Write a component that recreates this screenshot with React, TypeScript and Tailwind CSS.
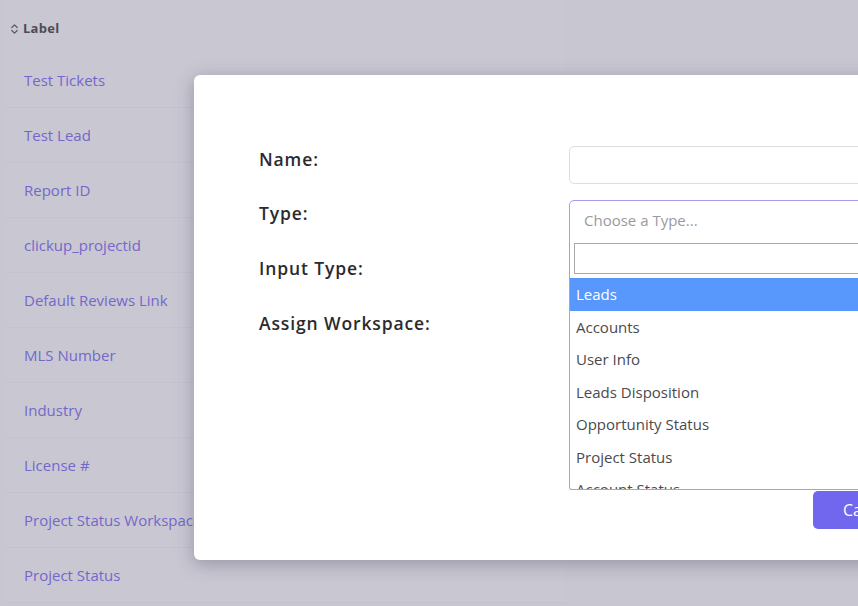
const fields = [
  'Test Tickets',
  'Test Lead',
  'Report ID',
  'clickup_projectid',
  'Default Reviews Link',
  'MLS Number',
  'Industry',
  'License #',
  'Project Status Workspace',
  'Project Status',
]

const types = [
  'Leads',
  'Accounts',
  'User Info',
  'Leads Disposition',
  'Opportunity Status',
  'Project Status',
  'Account Status',
]

function SortIcon() {
  return (
    <svg width="9" height="12" viewBox="0 0 9 12" fill="none" stroke="#5a5962" strokeWidth="1.2" strokeLinecap="round" strokeLinejoin="round">
      <path d="M1.8 4.5 L4.5 1.8 L7.2 4.5" />
      <path d="M1.8 7.5 L4.5 10.2 L7.2 7.5" />
    </svg>
  )
}

export default function App() {
  return (
    <div
      className="relative w-[858px] h-[606px] overflow-hidden bg-[#c8c6d1]"
      style={{ fontFamily: '"Open Sans", "Noto Sans", sans-serif' }}
    >
      {/* background table */}
      <div className="ml-[6px] w-[560px] bg-[#c9c7d2]">
        <div className="h-[53px] flex items-center gap-[4px] pl-[4px] pt-[4px] text-[13px] font-bold text-[#4d4c55] tracking-[0.02em]">
          <SortIcon />
          <span>Label</span>
        </div>
        {fields.map((f) => (
          <div
            key={f}
            className="h-[55px] flex items-center pl-[18px] border-b border-[#c4c2cd] text-[15px] text-[#7467cc] whitespace-nowrap"
          >
            {f}
          </div>
        ))}
      </div>

      {/* modal */}
      <div className="absolute left-[194px] top-[75px] w-[720px] h-[485px] bg-white rounded-[6px] shadow-[0_4px_18px_rgba(60,55,80,0.35)]">
        <div className="flex pt-[71px] pl-[65px]">
          <div className="w-[310px] flex flex-col text-[17.5px] font-semibold tracking-[0.05em] text-[#2b2b2e]">
            <div className="h-[54px] leading-[26px]">Name:</div>
            <div className="h-[55px] leading-[26px]">Type:</div>
            <div className="h-[55px] leading-[26px]">Input Type:</div>
            <div className="h-[55px] leading-[26px]">Assign Workspace:</div>
          </div>
          <div className="flex-1 flex flex-col">
            <div className="h-[38px] border border-[#dedde3] rounded-[5px]" />
            <div className="relative mt-[16px]">
              <div className="h-[40px] flex items-center pl-[14px] border border-[#a79bf2] rounded-t-[5px] text-[15px] text-[#9a9a9e]">
                Choose a Type...
              </div>
              <div className="absolute left-0 top-[39px] w-full h-[251px] bg-white border border-[#a9a9ad] border-t-0 rounded-b-[3px] overflow-hidden">
                <div className="px-[4px] pt-[4px] pb-[4px]">
                  <div className="h-[31px] border border-[#a9a9ad]" />
                </div>
                <div className="flex flex-col text-[15px] text-[#4a4a4e]">
                  {types.map((t, i) => (
                    <div
                      key={t}
                      className={
                        i === 0
                          ? 'h-[32.5px] flex items-center pl-[6px] bg-[#5897fb] text-white'
                          : 'h-[32.5px] flex items-center pl-[6px]'
                      }
                    >
                      {t}
                    </div>
                  ))}
                </div>
              </div>
            </div>
          </div>
        </div>
        <button className="absolute left-[619px] top-[416px] h-[38px] px-[30px] rounded-[5px] bg-[#7166ee] text-white text-[16px]">
          Cancel
        </button>
      </div>
    </div>
  )
}
